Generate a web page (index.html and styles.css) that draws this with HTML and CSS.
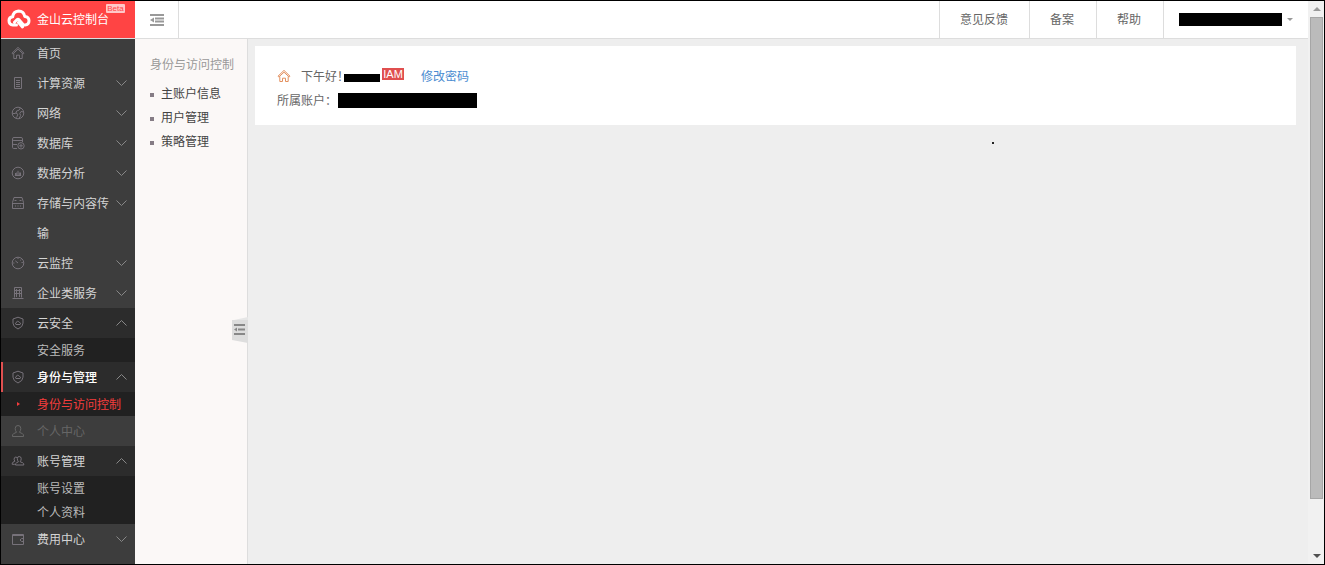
FILE: index.html
```html
<!DOCTYPE html>
<html lang="zh-CN">
<head>
<meta charset="utf-8">
<title>金山云控制台</title>
<link rel="stylesheet" href="styles.css">
</head>
<body>
<svg class="defs" aria-hidden="true">
  <symbol id="down" viewBox="0 0 11 6"><path d="M.5.5 5.5 5.5 10.5.5"/></symbol>
  <symbol id="up" viewBox="0 0 11 6"><path d="M.5 5.5 5.5.5 10.5 5.5"/></symbol>
  <symbol id="home" viewBox="0 0 14 14"><path d="M1 7.2 7 1.4l6 5.8-.8.8L7 3.2 1.8 8zM2.8 7.5v5h2.7V9.2h3v3.3h2.7v-5"/></symbol>
  <symbol id="server" viewBox="0 0 14 14"><path d="M3.5 1.5h7v11h-7zM5 4.5h4M5 6.5h4M5 8.5h4M5 10.5h4"/></symbol>
  <symbol id="globe" viewBox="0 0 14 14"><circle cx="7" cy="7" r="5.8"/><path d="M9.5 1.9 8 4.2 5.6 5 5 7 3 7.7 1.5 7M5 7l1.8 1.2L6 10.5 4.7 12M12.5 6 10 5.5 8.8 7.5l.8 2L8 12.5"/></symbol>
  <symbol id="database" viewBox="0 0 14 14"><path d="M6 12.5H2.8q-1.3 0-1.3-1.2V2.8Q1.5 1.5 3 1.5h7q1.5 0 1.5 1.3V6M1.5 3.500q0 1 1.500 1h8.500M1.500 7.500q0 1 1.500 1h3"/><circle cx="10" cy="9.8" r="3.2"/><path d="M10 8v3.6M8.2 9.8h3.6"/></symbol>
  <symbol id="analysis" viewBox="0 0 14 14"><circle cx="7" cy="7" r="5.8"/><path d="M4.5 9V7M7 9V4.8M9.500 9V6.500M5.700 9V6.500M8.300 9V6.500M3.8 9.5h6.4"/></symbol>
  <symbol id="storage" viewBox="0 0 14 14"><path d="M1.5 6.5 3 1.5h8l1.5 5v6h-11zM1.5 7.5h11M3.5 4.5h2M8.5 4.5h2M4 10h1M6.5 10h1M9 10h1"/></symbol>
  <symbol id="gauge" viewBox="0 0 14 14"><circle cx="7" cy="7" r="5.8"/><path d="M7 7 4.3 4.8M7 1.5V3M10 3.5 9.5 4.5M11.8 6.5h-1.3M2.2 7h1.2"/></symbol>
  <symbol id="building" viewBox="0 0 14 14"><path d="M3.5 11.5v-10h7v10M1.5 12.5h11M5.5 3v8M8.5 3v8M4 4.5h6M4 7.5h6"/></symbol>
  <symbol id="shield" viewBox="0 0 14 14"><path d="M7 1.2 12 3v4.2Q12 10.8 7 13 2 10.8 2 7.2V3zM5 8.5h4q1-.4.5-1.4Q9 6.3 8.3 6.5 7.8 5 6.4 5.3 5.3 5.6 5.3 6.8 4 7.1 4.5 8.1z"/></symbol>
  <symbol id="user" viewBox="0 0 14 14"><path d="M5.5 8.3Q4.2 6.5 4.2 4.4 4.2 1.5 7 1.5t2.8 2.9Q9.8 6.5 8.5 8.3l3 1.4q1.4.8 1 2.8h-11q-.4-2 1-2.8z"/></symbol>
  <symbol id="users" viewBox="0 0 14 14"><path d="M7.4 7.8Q6.3 6.3 6.3 4.6 6.3 2.5 8.2 2.5t2 2.1q0 1.7-1 3.2l2.6 1q1.2.6 1 2.2H4.5q-.2-1.6 1-2.2zM6 3.5Q4.8 2.6 3.6 3.6 2.4 5 3.8 7.3L2 8.2Q1 8.8 1.2 10.3h2.6"/></symbol>
  <symbol id="wallet" viewBox="0 0 14 14"><path d="M1.5 2.5h11v10h-11zM1.5 3.5h11M12.5 6.500H10.500L9 8l1.500 1.500h2"/></symbol>
</svg>
<div class="app">
  <div class="page">
    <header class="header">
      <a class="brand" href="#">
        <svg class="logo" viewBox="0 0 24 20"><path d="M9.5 16H6Q2 15.500 2 11.700 2 8.200 5.700 7.800 6.300 2.500 11.500 2q5.300 0 6.300 5.500 4.200.4 4.200 4.300 0 3.900-4 4.200h-1.500L12 10.800Q11 9.700 9.900 10.800L7.500 13.200M11.500 13.500l4 4.500"/></svg>
        <span>金山云控制台</span>
        <span class="beta">Beta</span>
      </a>
      <button class="collapse" aria-label="收起菜单"><svg viewBox="0 0 14 12"><path d="M0 1h14M5 4.500h9M5 7.500h9M0 11h14"/><path class="fill" d="M0 6 4 3.500v5z"/></svg></button>
      <nav class="top-links">
        <a href="#">意见反馈</a>
        <a href="#">备案</a>
        <a href="#">帮助</a>
        <button class="account" aria-label="账户菜单"><span class="mask mask-account"></span><span class="caret"></span></button>
      </nav>
    </header>
    <div class="content">
      <nav class="sidebar">
        <a class="item" href="#"><svg><use href="#home"/></svg><span>首页</span></a>
        <button class="item"><svg><use href="#server"/></svg><span>计算资源</span><svg class="chevron"><use href="#down"/></svg></button>
        <button class="item"><svg><use href="#globe"/></svg><span>网络</span><svg class="chevron"><use href="#down"/></svg></button>
        <button class="item"><svg><use href="#database"/></svg><span>数据库</span><svg class="chevron"><use href="#down"/></svg></button>
        <button class="item"><svg><use href="#analysis"/></svg><span>数据分析</span><svg class="chevron"><use href="#down"/></svg></button>
        <button class="item"><svg><use href="#storage"/></svg><span>存储与内容传输</span><svg class="chevron"><use href="#down"/></svg></button>
        <button class="item"><svg><use href="#gauge"/></svg><span>云监控</span><svg class="chevron"><use href="#down"/></svg></button>
        <button class="item"><svg><use href="#building"/></svg><span>企业类服务</span><svg class="chevron"><use href="#down"/></svg></button>
        <button class="item open"><svg><use href="#shield"/></svg><span>云安全</span><svg class="chevron"><use href="#up"/></svg></button>
        <a class="sub" href="#">安全服务</a>
        <button class="item open active"><svg><use href="#shield"/></svg><span>身份与管理</span><svg class="chevron"><use href="#up"/></svg></button>
        <a class="sub current" href="#">身份与访问控制</a>
        <div class="item section"><svg><use href="#user"/></svg><span>个人中心</span></div>
        <button class="item open"><svg><use href="#users"/></svg><span>账号管理</span><svg class="chevron"><use href="#up"/></svg></button>
        <a class="sub" href="#">账号设置</a>
        <a class="sub" href="#">个人资料</a>
        <button class="item"><svg><use href="#wallet"/></svg><span>费用中心</span><svg class="chevron"><use href="#down"/></svg></button>
      </nav>
      <aside class="submenu">
        <h2>身份与访问控制</h2>
        <ul>
          <li><a href="#">主账户信息</a></li>
          <li><a href="#">用户管理</a></li>
          <li><a href="#">策略管理</a></li>
        </ul>
        <button class="handle" aria-label="收起子菜单"><svg viewBox="0 0 16 26"><path class="tab" d="M0 3H16v23L0 23z"/><path class="edge" d="M2 3 16 0v3z"/><path class="lines" d="M2 8h11M6 12.500h7M2 17h11"/><path class="arrow" d="M2 12.500 5 10.500v4z"/></svg></button>
      </aside>
      <main class="main">
        <section class="card">
          <p class="line"><svg class="house"><use href="#home"/></svg><span>下午好！</span><span class="mask mask-name"></span><span class="iam">IAM</span><a href="#">修改密码</a></p>
          <p class="line"><span>所属账户：</span><span class="mask mask-id"></span></p>
        </section>
        <span class="speck"></span>
      </main>
    </div>
  </div>
  <div class="scrollbar" aria-hidden="true">
    <span class="arrow-up"></span>
    <span class="thumb"></span>
    <span class="arrow-down"></span>
  </div>
</div>
</body>
</html>
```
FILE: styles.css
```css
* { box-sizing: border-box; }
body, h2, ul, p { margin: 0; padding: 0; }
body {
  font: 12px/24px "Noto Sans CJK SC", sans-serif;
  color: #666;
}
a { color: inherit; text-decoration: none; }
button { font: inherit; color: inherit; background: none; border: 0; padding: 0; text-align: left; cursor: pointer; }
svg { display: block; flex: none; }
.defs { position: absolute; width: 0; height: 0; }

.app { display: flex; min-height: 100vh; border: 1px solid #000; }
.page { flex: 1; display: flex; flex-direction: column; }

.header { position: relative; z-index: 1; display: flex; height: 37px; background: #fff; box-shadow: 0 1px #ddd; }
.brand { position: relative; display: flex; align-items: center; gap: 6px; width: 134px; padding: 0 0 2px 6px; background: #ff4444; color: #fff; }
.logo { width: 24px; height: 20px; fill: none; stroke: #fff; stroke-width: 3; stroke-linecap: round; stroke-linejoin: round; }
.beta { position: absolute; left: 105px; top: 3px; width: 19px; height: 9px; border-radius: 1px; background: #ffc8c8; color: #ff4444; font: 8px/9px "Liberation Sans", sans-serif; text-align: center; }
.collapse { display: flex; align-items: center; justify-content: center; width: 44px; padding-top: 1px; border-right: 1px solid #ddd; }
.collapse svg { width: 14px; height: 12px; fill: none; stroke: #999; }
.collapse path { stroke-width: 2; }
.collapse .fill { fill: #999; stroke: none; }
.top-links { display: flex; margin-left: auto; line-height: 35px; }
.top-links > * { padding: 0 21px 0 20px; border-left: 1px solid #ddd; }
.top-links > a + a { padding-right: 22px; padding-left: 20px; }
.top-links .account { display: flex; align-items: center; gap: 5px; padding: 0 15px; }
.caret { border: 3px solid transparent; border-top-color: #999; border-bottom: 0; }
.mask { background: #000; flex: none; }
.mask-account { width: 103px; height: 13px; }

.content { flex: 1; display: flex; }
.sidebar { width: 134px; background: #3d3d3d; color: #d4d4d4; }
.item { display: flex; align-items: flex-start; width: 100%; line-height: 30px; border-left: 2px solid transparent; padding: 0 8px 0 8px; }
.item svg { width: 14px; height: 14px; margin: 8px 12px 0 0; fill: none; stroke: #77727a; }
.item span { flex: 1; }
.item .chevron { width: 11px; height: 6px; margin: 12px 0 0; stroke: #888; }
.open { background: #2c2c2c; }
.active { border-left-color: #e05050; color: #fff; font-weight: 500; }
.sub { display: block; padding-left: 36px; background: #212121; color: #bbb; }
.current { position: relative; color: #f53d3d; }
.current::before { content: ""; position: absolute; left: 16px; top: 10px; border: 2px solid transparent; border-left: 3px solid #f53d3d; border-right: 0; }
.section { color: #666; }
.section svg { stroke: #666; }

.submenu { position: relative; width: 113px; padding: 14px 0 0 15px; background: #fbf8f7; border-right: 1px solid #ddd; }
.submenu h2 { font-size: 12px; font-weight: 400; line-height: 24px; color: #999; margin-bottom: 5px; }
.submenu ul { list-style: none; color: #444; }
.submenu li { display: flex; align-items: center; gap: 7px; }
.submenu li::before { content: ""; width: 4px; height: 4px; margin-top: 4px; background: #857c85; }
.handle { position: absolute; right: -1px; top: 279px; }
.handle svg { width: 16px; height: 26px; }
.tab { fill: #ddd; }
.edge { fill: #e6e6e6; }
.lines { stroke: #888; stroke-width: 2; }
.arrow { fill: #888; }

.main { position: relative; flex: 1; padding: 8px 12px 0 7px; background: #eee; }
.card { padding: 18px 22px 13px; background: #fff; }
.line { display: flex; align-items: center; }
.house { width: 14px; height: 14px; margin: 0 10px 0 0; fill: none; stroke: #e3905f; }
.mask-name { width: 36px; height: 8px; margin: 4px 2px 0 -5px; }
.iam { width: 22px; height: 12px; margin: 0 17px 5px 0; background: #e04f4f; color: #fff; font: 11px/12px "Liberation Sans", sans-serif; text-align: center; }
.line a { color: #4a8bd0; }
.mask-id { width: 139px; height: 15px; margin: 1px 0 0 1px; }
.speck { position: absolute; left: 744px; top: 104px; width: 2px; height: 2px; background: #222; }

.scrollbar { display: flex; flex-direction: column; align-items: center; width: 16px; padding: 6px 1px 6px 2px; background: #f1f1f1; }
.arrow-up { border: 4px solid transparent; border-bottom-color: #999; border-top: 0; }
.thumb { flex: 0 0 87.5%; width: 13px; margin-top: 6px; background: #bbb; border: 1px solid #a6a6a6; }
.arrow-down { margin-top: auto; border: 4px solid transparent; border-top-color: #505050; border-bottom: 0; }
```
